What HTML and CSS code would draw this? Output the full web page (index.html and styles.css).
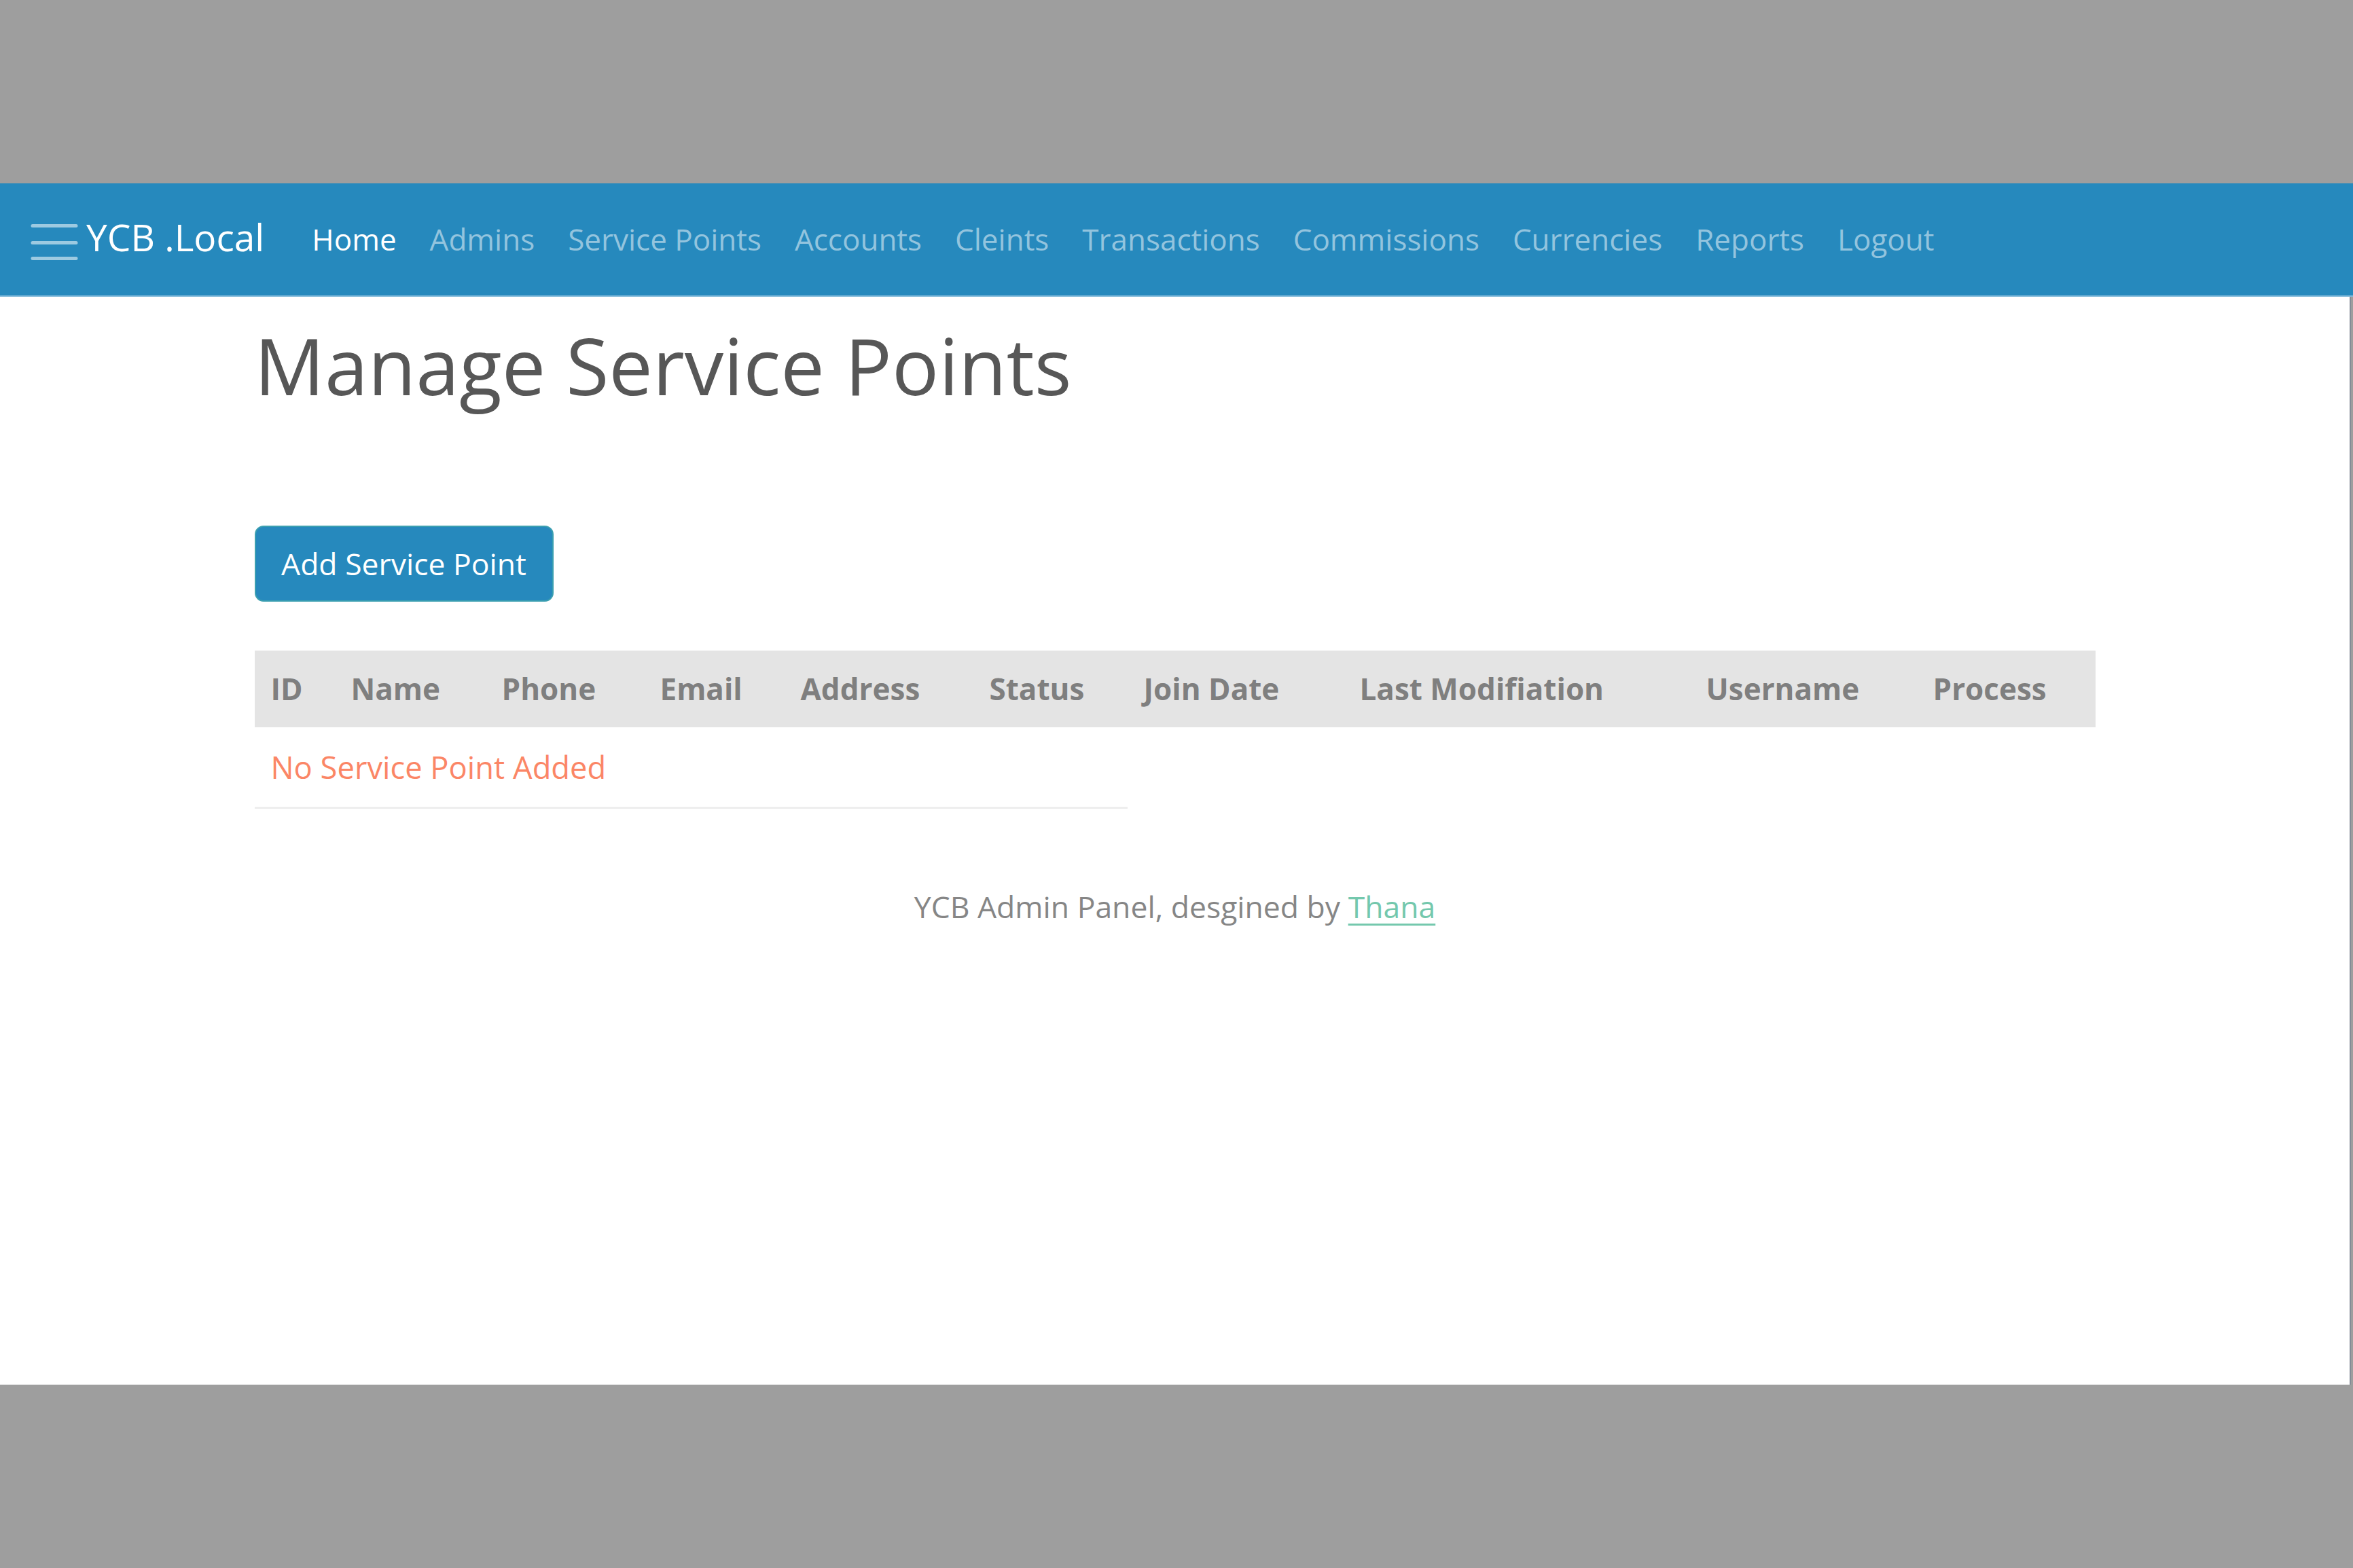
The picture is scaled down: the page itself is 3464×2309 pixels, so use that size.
FILE: index.html
```html
<!DOCTYPE html>
<html lang="en">
<head>
<meta charset="utf-8">
<title>Manage Service Points</title>
<link rel="stylesheet" href="styles.css">
</head>
<body>
<div class="top-gap"></div>
<div class="window">
  <nav class="navbar">
    <svg class="toggler" width="70" height="64" viewBox="0 0 70 64" aria-hidden="true">
      <path d="M3 11.5H67M3 36.5H67M3 59.5H67" stroke="rgba(255,255,255,0.55)" stroke-width="5" stroke-linecap="round" fill="none"/>
    </svg>
    <a class="brand" href="#">YCB .Local</a>
    <ul class="nav">
      <li><a class="nav-link active" href="#">Home</a></li>
      <li><a class="nav-link" href="#">Admins</a></li>
      <li><a class="nav-link" href="#">Service Points</a></li>
      <li><a class="nav-link" href="#">Accounts</a></li>
      <li><a class="nav-link" href="#">Cleints</a></li>
      <li><a class="nav-link" href="#">Transactions</a></li>
      <li><a class="nav-link" href="#">Commissions</a></li>
      <li><a class="nav-link" href="#">Currencies</a></li>
      <li><a class="nav-link" href="#">Reports</a></li>
      <li><a class="nav-link" href="#">Logout</a></li>
    </ul>
  </nav>
  <main class="container">
    <h1 class="page-title">Manage Service Points</h1>
    <a class="btn" href="#">Add Service Point</a>
    <table class="table">
      <colgroup>
        <col class="c-id"><col class="c-name"><col class="c-phone"><col class="c-email"><col class="c-address">
        <col class="c-status"><col class="c-join"><col class="c-mod"><col class="c-user"><col class="c-proc">
      </colgroup>
      <thead>
        <tr>
          <th>ID</th><th>Name</th><th>Phone</th><th>Email</th><th>Address</th>
          <th>Status</th><th>Join Date</th><th>Last Modifiation</th><th>Username</th><th>Process</th>
        </tr>
      </thead>
      <tbody>
        <tr><td class="empty" colspan="6">No Service Point Added</td></tr>
      </tbody>
    </table>
  </main>
  <footer class="footer">YCB Admin Panel, desgined by <a href="#">Thana</a></footer>
</div>
</body>
</html>
```
FILE: styles.css
```css
html, body {
  margin: 0;
  padding: 0;
}
body {
  background: #9e9e9e;
  font-family: "Open Sans", "Noto Sans", sans-serif;
  color: #585858;
}
.top-gap {
  height: 270px;
}
.window {
  height: 1769px;
  background: #ffffff;
  margin-right: 3px;
  border-right: 2px solid #858c97;
  box-sizing: border-box;
  display: flex;
  flex-direction: column;
}
.navbar {
  height: 167px;
  background: #2689bd;
  margin-right: -5px;
  display: flex;
  align-items: center;
  padding-left: 45px;
  box-sizing: border-box;
  border-bottom: 2px solid #7fb9da;
}
.toggler {
  display: block;
  flex: none;
}
.brand {
  margin-left: 12px;
  font-size: 55px;
  line-height: 60px;
  color: #ffffff;
  text-decoration: none;
  margin-top: -8px;
}
.nav {
  list-style: none;
  margin: 0 0 0 70px;
  padding: 0;
  display: flex;
  gap: 49px;
}
.nav-link {
  display: block;
  font-size: 44px;
  line-height: 47px;
  color: #93c4de;
  text-decoration: none;
}
.nav-link.active {
  color: #ffffff;
}
.container {
  width: 2710px;
  margin: 0 auto;
}
.page-title {
  margin: 31px 0 0;
  font-size: 115px;
  line-height: 140px;
  font-weight: 400;
  color: #575757;
}
.btn {
  display: block;
  width: 440px;
  height: 112px;
  box-sizing: border-box;
  margin-top: 166px;
  background: #2689bd;
  border: 2px solid #3b9fb0;
  border-radius: 13px;
  color: #ffffff;
  text-decoration: none;
  text-align: center;
  font-size: 44.5px;
  line-height: 108px;
  white-space: nowrap;
}
.table {
  margin-top: 72px;
  width: 2710px;
  border-collapse: collapse;
  table-layout: fixed;
}
.c-id { width: 118px; }
.c-name { width: 222px; }
.c-phone { width: 233px; }
.c-email { width: 207px; }
.c-address { width: 278px; }
.c-status { width: 227px; }
.c-join { width: 318px; }
.c-mod { width: 510px; }
.c-user { width: 334px; }
.c-proc { width: 263px; }
.table th {
  background: #e4e4e4;
  color: #7f7f7f;
  font-weight: 700;
  font-size: 44px;
  line-height: 113px;
  height: 113px;
  padding: 0 0 0 24px;
  text-align: left;
  white-space: nowrap;
}
.table td.empty {
  color: #fb8666;
  font-size: 45.3px;
  line-height: 117px;
  padding: 0 0 0 24px;
  border-bottom: 3px solid #eeeeee;
}
.footer {
  margin-top: 114px;
  text-align: center;
  font-size: 44.5px;
  line-height: 60px;
  color: #868686;
}
.footer a {
  color: #74c8ad;
  text-decoration: underline;
  text-underline-offset: 8px;
  text-decoration-thickness: 3px;
}
```
